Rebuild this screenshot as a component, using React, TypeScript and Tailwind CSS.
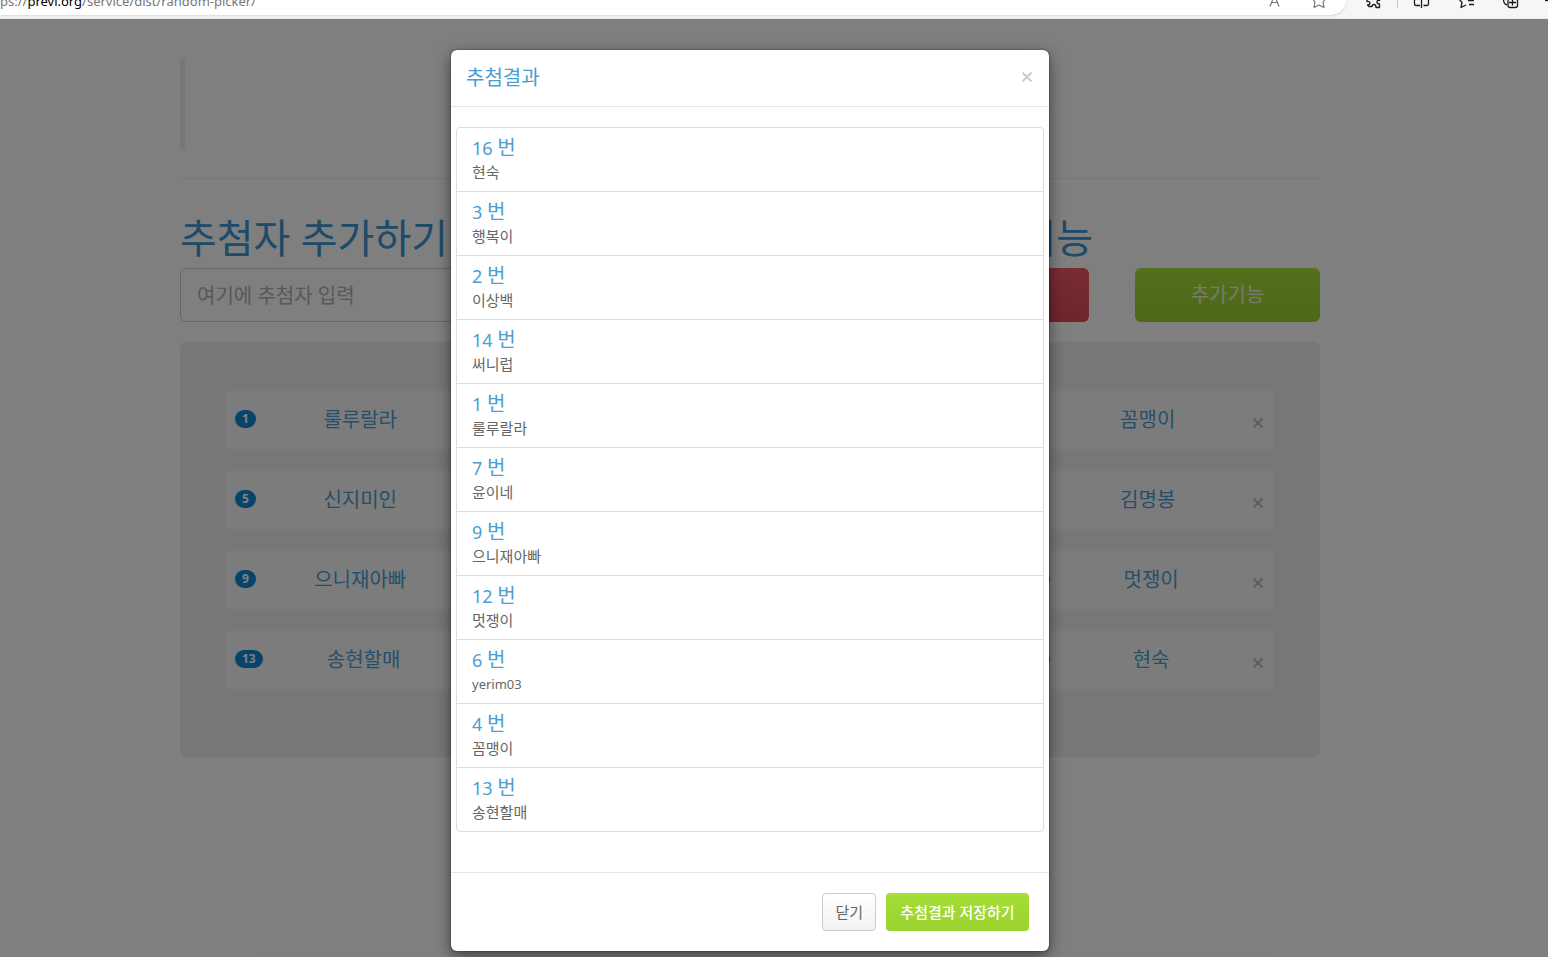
import React from "react";
import clsx from "clsx";

type Entry = { id: number; name: string };

const entries: Entry[] = [
  { id: 1, name: "룰루랄라" },
  { id: 2, name: "이상백" },
  { id: 3, name: "행복이" },
  { id: 4, name: "꼼맹이" },
  { id: 5, name: "신지미인" },
  { id: 6, name: "yerim03" },
  { id: 7, name: "윤이네" },
  { id: 8, name: "김명봉" },
  { id: 9, name: "으니재아빠" },
  { id: 10, name: "" },
  { id: 11, name: "" },
  { id: 12, name: "멋쟁이" },
  { id: 13, name: "송현할매" },
  { id: 14, name: "써니럽" },
  { id: 15, name: "" },
  { id: 16, name: "현숙" },
];

const drawOrder = [16, 3, 2, 14, 1, 7, 9, 12, 6, 4, 13];

const isLatin = (text: string) => /^[\w\s]+$/.test(text);

const CloseIcon = () => (
  <svg width="10" height="10" viewBox="0 0 10 10" stroke="currentColor" strokeWidth="2">
    <path d="M.5 .5l9 9M9.500 .5l-9 9" />
  </svg>
);

const BrowserBar = () => (
  <header className="flex h-[19px] overflow-hidden border-b border-[#e8e8e8] bg-[#f6f6f6]">
    <div className="flex h-[15px] w-[1346px] shrink-0 items-end justify-between rounded-br-2xl bg-white pr-[17px] shadow-sm">
      <p className="h-[15px] text-[13px] leading-4 text-[#767676]">
        <span className="-mt-[7px] block whitespace-nowrap">
          ps://<span className="text-black">previ.org</span>/service/dist/random-picker/
        </span>
      </p>
      <div className="flex items-start gap-[26px] text-[#767676]">
        <svg width="16" height="15" viewBox="0 0 16 15" fill="none" stroke="currentColor" strokeWidth="1.2">
          <path d="M1 6.500L5.500-5L10 6.500M2.500 2.500h6M14 0q1-1 0-3" />
        </svg>
        <svg width="18" height="15" viewBox="0 0 18 15" fill="none" stroke="currentColor" strokeWidth="1.200" strokeLinejoin="round">
          <path d="M1-2L4 2L3 7.500L8 5L13 7.500L12 2L15-2" />
        </svg>
      </div>
    </div>
    <div className="flex shrink-0 items-start pl-5 text-[#1b1b1b]">
      <svg width="182" height="9" viewBox="0 0 182 9" fill="none" stroke="currentColor" strokeWidth="1.3" strokeLinejoin="round">
        <path d="M1-2V1.500Q4 1 4 3.500Q3.500 5 1.500 5L3 6.500H6Q6 4.500 8 4.500T10 7.500H13.500V4Q11 4 11 2T13.500 .500V-2" />
        <path d="M31.500 0V8" stroke="#c8c8c8" strokeWidth="1" />
        <path d="M48.500-2V4Q48.500 5.500 50 5.500H54M55.500-2V8M57.500 5.500H61Q62.500 5.500 62.500 4V-2" />
        <path d="M93-1L96 2.500L95 7.500L100 5M102 .500H108M103 4.500H108" />
        <path d="M137.500-1Q137.500 4 141 5M142-2V5.500Q142 7.500 144 7.500H149.500Q151.500 7.500 151.500 5.500V-2M146.500-2V5.500M143 2.500H150" />
        <path d="M179 .500H182" />
      </svg>
    </div>
  </header>
);

const EntryCard = ({ entry }: { entry: Entry }) => (
  <li className="flex h-[60px] items-center rounded border border-[#f0f0f0] bg-[#f9f9f9] px-[9px]">
    <span className="mb-[2px] h-[18px] rounded-full bg-[#1187d6] px-[7px] text-[12px] leading-[18px] font-bold text-white">
      {entry.id}
    </span>
    <span className="flex-1 text-center text-[20px] text-[#4a9ed2]">{entry.name}</span>
    <button type="button" aria-label={`${entry.id}번 삭제`} className="mt-1.5 mr-px p-px text-[#bbbbbb]">
      <CloseIcon />
    </button>
  </li>
);

const PickerPage = () => (
  <div className="pr-12 [grid-area:1/1]">
    <div className="mx-auto max-w-[1140px] pt-10">
      <div className="h-[90px] border-l-[5px] border-[#eeeeee]" />
      <hr className="mt-[29px] border-[#eeeeee]" />
      <div className="mt-8 flex gap-[46px]">
        <div className="flex-1">
          <h1 className="pb-1 text-[40px] leading-[53px] text-[#3a96d2]">
            <label htmlFor="entrant">추첨자 추가하기</label>
          </h1>
          <input
            id="entrant"
            type="text"
            placeholder="여기에 추첨자 입력"
            className="block h-[54px] w-full rounded-md border border-[#cccccc] px-4 text-[20px] placeholder:text-[#b0b0b0]"
          />
        </div>
        <div className="w-[185px]">
          <h1 className="-mr-1 pb-1 text-right text-[40px] leading-[53px] text-[#3a96d2]">추첨 기능</h1>
          <button
            type="button"
            aria-label="추첨"
            className="block h-[54px] w-full rounded-md bg-linear-to-b from-[#f25a66] to-[#dd4c57]"
          />
        </div>
        <div className="w-[185px] pt-[57px]">
          <button
            type="button"
            className="block h-[54px] w-full rounded-md bg-linear-to-b from-[#a8e038] to-[#9ad230] text-[20px] text-[#f0f6e0]"
          >
            추가기능
          </button>
        </div>
      </div>
      <ul className="mt-5 grid grid-cols-4 gap-y-5 rounded-md bg-[#eeeeee] px-[45px] pt-12 pb-[67px]">
        {entries.map((entry) => (
          <EntryCard key={entry.id} entry={entry} />
        ))}
      </ul>
    </div>
  </div>
);

const ResultModal = () => (
  <div className="z-10 bg-black/50 pt-[31px] pr-12 pb-1.5 [grid-area:1/1]">
    <div
      role="dialog"
      aria-labelledby="result-title"
      className="mx-auto max-w-[598px] rounded-md bg-white shadow-[0_5px_15px_rgba(0,0,0,0.5),0_0_2px_rgba(0,0,0,0.6)]"
    >
      <div className="flex h-[57px] items-center justify-between border-b border-[#e5e5e5] px-[15px]">
        <h4 id="result-title" className="text-[20px] text-[#4a9ed2]">
          추첨결과
        </h4>
        <button type="button" aria-label="창 닫기" className="mb-0.5 p-[2px] text-[#cccccc]">
          <CloseIcon />
        </button>
      </div>
      <div className="px-[5px] pt-5 pb-10">
        <ul className="divide-y divide-[#dddddd] rounded border border-[#dddddd]">
          {drawOrder.map((id) => {
            const name = entries.find((entry) => entry.id === id)?.name ?? "";
            return (
              <li key={id} className="h-16 px-[15px] pt-[7px] last:h-[63px]">
                <h4 className="text-[20px] leading-[25px] text-[#4a9ed2]">
                  <span className="text-[18px]">{id} </span>번
                </h4>
                <p
                  className={clsx(
                    "leading-[22px] text-[#666666]",
                    isLatin(name) ? "text-[13px]" : "text-[15px]"
                  )}
                >
                  {name}
                </p>
              </li>
            );
          })}
        </ul>
      </div>
      <div className="flex justify-end gap-2.5 border-t border-[#e5e5e5] p-5">
        <button
          type="button"
          className="h-[38px] rounded border border-[#cccccc] bg-linear-to-b from-white to-[#f2f2f2] px-3 text-[15px] text-[#666666]"
        >
          닫기
        </button>
        <button
          type="button"
          className="h-[38px] min-w-[143px] rounded bg-linear-to-b from-[#a5de37] to-[#9bd22f] px-3 text-[15px] font-medium text-white"
        >
          추첨결과 저장하기
        </button>
      </div>
    </div>
  </div>
);

const App = () => {
  return (
    <div className="flex min-h-screen flex-col bg-white font-['Noto_Sans','Noto_Sans_CJK_KR',sans-serif]">
      <BrowserBar />
      <main className="grid flex-1">
        <PickerPage />
        <ResultModal />
      </main>
    </div>
  );
};

export default App;
